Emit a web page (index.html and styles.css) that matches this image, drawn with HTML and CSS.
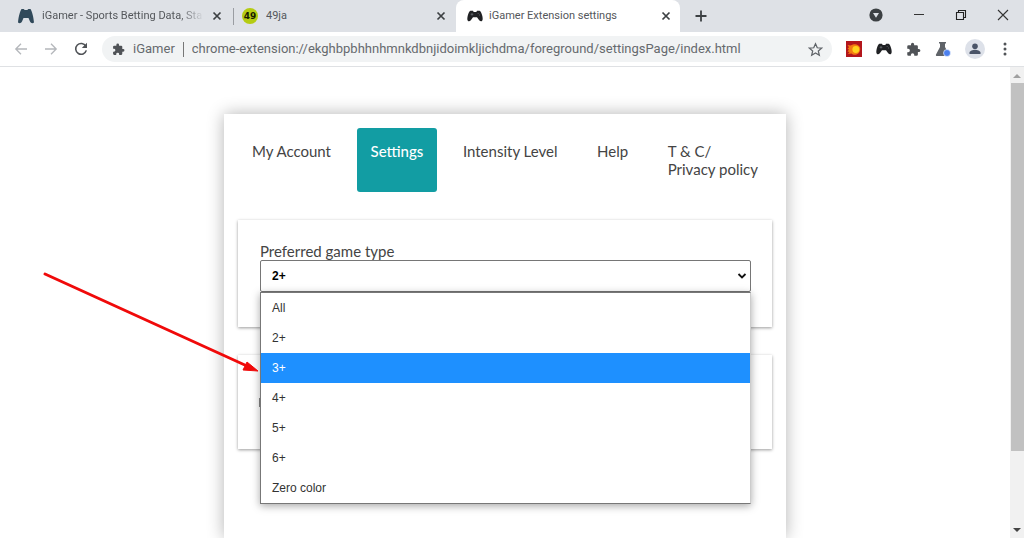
FILE: index.html
```html
<!DOCTYPE html>
<html lang="en">
<head>
<meta charset="utf-8">
<title>iGamer Extension settings</title>
<link rel="stylesheet" href="styles.css">
</head>
<body>
<svg class="defs" aria-hidden="true">
  <symbol id="pad" viewBox="0 0 24 18"><path d="M5 1h4l1 2h4l1-2h4c2 1 3 4 4 8 .6 3 1 6-.5 7.500-1.500 1-3 .4-4.500-1.500l-3-4H9l-3 4c-1.500 1.900-3 2.500-4.500 1.500C0 15 .4 12 1 9c1-4 2-7 4-8z"/><path d="M7.500 4.500v4M5.500 6.500h4M16 5.200h1.500M18 7.500h1.500" stroke="#70757a" stroke-width="1" fill="none"/></symbol>
  <symbol id="cross" viewBox="0 0 10 10"><path d="M1.500 1.500l7 7M8.500 1.500l-7 7" fill="none" stroke="currentColor" stroke-width="1.700"/></symbol>
  <symbol id="puzzle" viewBox="0 0 24 24"><path d="M20.500 11H19V7a2 2 0 0 0-2-2h-4V3.500a2.500 2.500 0 0 0-5 0V5H4a2 2 0 0 0-2 2v3.800h1.500a2.700 2.700 0 0 1 0 5.400H2V20a2 2 0 0 0 2 2h3.800v-1.500a2.700 2.700 0 0 1 5.400 0V22H17a2 2 0 0 0 2-2v-4h1.500a2.500 2.500 0 0 0 0-5z"/></symbol>
</svg>
<header class="browser">
  <div class="tabstrip">
    <div class="tab tab-first">
      <svg class="favicon favicon-tall" viewBox="0 0 16 16"><path d="M3.500 1h2.200l1 1h2.600l1-1h2.200C14 3 15.500 9 16 14.500c-1.500 1.200-3 .8-4-1L10.500 10h-5L4 13.500c-1 1.800-2.500 2.200-4 1C.5 9 2 3 3.500 1z"/></svg>
      <span class="tab-title fade">iGamer - Sports Betting Data, Sta</span>
      <button class="icon-btn" aria-label="Close tab"><svg class="x"><use href="#cross"/></svg></button>
    </div>
    <div class="tab tab-second">
      <span class="ball" aria-hidden="true">49</span>
      <span class="tab-title">49ja</span>
      <button class="icon-btn" aria-label="Close tab"><svg class="x"><use href="#cross"/></svg></button>
    </div>
    <div class="tab tab-active">
      <svg class="favicon"><use href="#pad"/></svg>
      <span class="tab-title">iGamer Extension settings</span>
      <button class="icon-btn" aria-label="Close tab"><svg class="x"><use href="#cross"/></svg></button>
    </div>
    <button class="icon-btn new-tab" aria-label="New tab"><svg viewBox="0 0 12 12" width="12" height="12"><path d="M6 .5v11M.5 6h11" stroke="#3c4043" stroke-width="1.800"/></svg></button>
    <div class="window-controls">
      <button class="icon-btn" aria-label="Search tabs"><svg viewBox="0 0 14 14" width="14" height="14"><circle cx="7" cy="7" r="6.600" fill="#3c4043"/><path d="M4 5h6L7 9.800z" fill="#dee1e6"/></svg></button>
      <button class="icon-btn" aria-label="Minimize"><svg viewBox="0 0 12 12" width="12" height="12"><path d="M1 5.500h10" stroke="#333"/></svg></button>
      <button class="icon-btn" aria-label="Restore"><svg viewBox="0 0 12 12" width="12" height="12"><path d="M1.500 3.500h7v7h-7zM3.500 3.500v-2h7v7h-2" fill="none" stroke="#222" stroke-width="1.100"/></svg></button>
      <button class="icon-btn" aria-label="Close"><svg viewBox="0 0 12 12" width="12" height="12"><path d="M1 1l10 10M11 1L1 11" stroke="#333" stroke-width="1.100"/></svg></button>
    </div>
  </div>
  <div class="toolbar">
    <div class="nav-buttons">
      <button class="icon-btn" aria-label="Back"><svg viewBox="0 0 14 14" width="14" height="14"><path d="M13 7H2M7 1.800L1.800 7 7 12.200" fill="none" stroke="#b4b7bb" stroke-width="1.300"/></svg></button>
      <button class="icon-btn" aria-label="Forward"><svg viewBox="0 0 14 14" width="14" height="14"><path d="M1 7h11M7 1.800L12.200 7 7 12.200" fill="none" stroke="#b4b7bb" stroke-width="1.300"/></svg></button>
      <button class="icon-btn" aria-label="Reload"><svg viewBox="0 0 14 14" width="14" height="14"><path d="M11.800 4.200A5.400 5.400 0 1 0 12.300 8.400" fill="none" stroke="#505357" stroke-width="1.600"/><path d="M13 .8v5.200H7.800z" fill="#505357"/></svg></button>
    </div>
    <div class="omnibox">
      <svg class="puzzle"><use href="#puzzle"/></svg>
      <span class="origin">iGamer</span>
      <input class="url" type="text" aria-label="Address" value="chrome-extension://ekghbpbhhnhmnkdbnjidoimkljichdma/foreground/settingsPage/index.html">
      <button class="icon-btn" aria-label="Bookmark"><svg viewBox="0 0 24 24" width="15" height="15"><path d="M12 2.800l2.800 6.400 7 .6-5.300 4.600 1.600 6.800-6.100-3.600-6.100 3.600 1.600-6.800-5.300-4.600 7-.6z" fill="none" stroke="#5f6368" stroke-width="2"/></svg></button>
    </div>
    <div class="extensions">
      <button class="icon-btn" aria-label="Fireball"><svg viewBox="0 0 16 16" width="16" height="16"><path fill="#b3161c" d="M0 0h16v16H0z"/><path d="M1.500 4l3 .6L7 3.500c3-1 6 .5 7 3 .8 3-.8 6-3.500 7-2 .7-4 0-5-1l-3.500.5 1.500-2-2-.5 1.500-2-1.500-.8 1.500-1.500z" fill="#f47a12"/><circle cx="9.800" cy="8.500" r="3.400" fill="#ffd21c"/></svg></button>
      <button class="icon-btn" aria-label="iGamer"><svg class="favicon"><use href="#pad"/></svg></button>
      <button class="icon-btn" aria-label="Extensions"><svg class="puzzle puzzle-large"><use href="#puzzle"/></svg></button>
      <button class="icon-btn" aria-label="Labs"><svg viewBox="0 0 16 16" width="16" height="16"><path d="M4 1h7v1.500h-1V6l4 7.500c.3 1-.2 1.500-1 1.500H2c-1 0-1.400-.7-1-1.500L5 6V2.500H4z" fill="#5f6368"/><circle cx="12" cy="12" r="3.500" fill="#4c80ee" stroke="#fff" stroke-width=".6"/></svg></button>
      <button class="icon-btn" aria-label="Profile"><svg viewBox="0 0 20 20" width="20" height="20"><circle cx="10" cy="10" r="10" fill="#dde1e9"/><circle cx="10" cy="7.200" r="2.800" fill="#4a5468"/><path d="M4.500 15v-1.300c0-2 3.500-3 5.500-3s5.500 1 5.500 3V15z" fill="#4a5468"/></svg></button>
      <button class="icon-btn more" aria-label="Menu"><svg viewBox="0 0 4 14" width="4" height="14" fill="#505357"><circle cx="2" cy="2" r="1.500"/><circle cx="2" cy="7" r="1.500"/><circle cx="2" cy="12" r="1.500"/></svg></button>
    </div>
  </div>
</header>
<div class="viewport">
  <main class="page">
    <div class="card">
      <nav class="menu">
        <a href="#account">My Account</a>
        <a href="#settings" class="current">Settings</a>
        <a href="#intensity">Intensity Level</a>
        <a href="#help">Help</a>
        <a href="#terms">T &amp; C/<br>Privacy policy</a>
      </nav>
      <section class="panel">
        <label for="game-type">Preferred game type</label>
        <div class="dropdown">
          <select id="game-type">
            <option>All</option>
            <option selected>2+</option>
            <option>3+</option>
            <option>4+</option>
            <option>5+</option>
            <option>6+</option>
            <option>Zero color</option>
          </select>
          <svg class="chevron" viewBox="0 0 10 8"><path d="M1.500 2L5 5.500 8.500 2" fill="none" stroke="#111" stroke-width="1.800"/></svg>
          <ul class="options" role="listbox" aria-label="Preferred game type">
            <li role="option">All</li>
            <li role="option">2+</li>
            <li role="option" class="hover" aria-selected="true">3+</li>
            <li role="option">4+</li>
            <li role="option">5+</li>
            <li role="option">6+</li>
            <li role="option">Zero color</li>
          </ul>
          <svg class="pointer" viewBox="0 0 220 104" aria-hidden="true"><path d="M5 4L207 96" stroke="#f00a0a" stroke-width="3" stroke-linecap="round"/><path d="M218 101l-15-1 4-8z" fill="#f00a0a" stroke="#f00a0a"/></svg>
        </div>
      </section>
      <section class="panel panel-short"><span class="field-edge"></span></section>
    </div>
  </main>
  <div class="scrollbar" aria-hidden="true">
    <svg viewBox="0 0 8 5" width="8" height="5"><path d="M0 5l4-4 4 4z" fill="#a0a0a0"/></svg>
    <div class="thumb"></div>
    <svg viewBox="0 0 8 5" width="8" height="5"><path d="M0 0l4 4 4-4z" fill="#444"/></svg>
  </div>
</div>
</body>
</html>
```
FILE: styles.css
```css
* { box-sizing: border-box; }
body {
  margin: 0;
  height: 100vh;
  display: flex;
  flex-direction: column;
  overflow: hidden;
  background: #fff;
  color: #444;
  font: 15px/18px Lato, sans-serif;
}
svg { display: block; flex: none; }
.defs { position: absolute; width: 0; height: 0; }
.icon-btn {
  display: flex;
  flex: none;
  padding: 0;
  border: 0;
  background: none;
  color: #3c4043;
}

.browser { font-family: Roboto, "Noto Sans", sans-serif; }
.tabstrip {
  display: flex;
  height: 32px;
  background: #dee1e6;
  font-size: 11px;
}
.tab {
  display: flex;
  align-items: center;
  gap: 8px;
  min-width: 0;
  color: #54575b;
}
.tab-first { flex: 0 1 233px; padding: 0 11px 0 18px; }
.tab-second { flex: 0 1 223px; padding: 0 10px 0 9px; background: linear-gradient(#9a9da2, #9a9da2) left 8px / 1px 17px no-repeat; }
.tab-active { flex: 0 1 224px; padding: 0 9px 0 11px; gap: 6px; background: #fff; border-radius: 8px 8px 0 0; }
.tab-title { flex: 1; min-width: 0; overflow: hidden; white-space: nowrap; }
.fade { mask-image: linear-gradient(90deg, #000 85%, transparent); }
.favicon { width: 16px; height: 14px; fill: #202124; }
.favicon-tall { height: 16px; fill: #30495a; }
.x { width: 10px; height: 10px; }
.ball {
  display: grid;
  place-items: center;
  width: 16px;
  height: 16px;
  border-radius: 50%;
  background: #b5cc12;
  color: #181c00;
  font: bold 9px/16px "DejaVu Sans", sans-serif;
}
.new-tab { align-items: center; margin-left: 15px; }
.window-controls {
  display: flex;
  align-items: center;
  gap: 30px;
  margin: 0 15px 2px auto;
}
.toolbar {
  display: flex;
  align-items: center;
  height: 35px;
  border-bottom: 1px solid #dfe1e4;
}
.nav-buttons { display: flex; gap: 16px; padding: 0 14px 0 14px; }
.omnibox {
  display: flex;
  flex: 1;
  align-items: center;
  min-width: 0;
  height: 26px;
  padding: 0 9px 0 10px;
  border-radius: 13px;
  background: #f1f3f4;
  color: #666a6e;
  font-size: 13px;
}
.puzzle { width: 13px; height: 13px; fill: #505357; }
.puzzle-large { width: 15px; height: 15px; }
.origin { margin: 0 8px 0 8px; }
.url {
  flex: 1;
  min-width: 0;
  height: 15px;
  padding: 0 0 0 8px;
  border: 0;
  border-left: 1px solid #777;
  background: none;
  color: inherit;
  font: inherit;
}
.extensions { display: flex; align-items: center; gap: 14px; padding: 0 17px 0 14px; }
.more { margin-left: 4px; }

.viewport { display: flex; flex: 1; min-height: 0; }
.page { flex: 1; min-width: 0; padding-top: 47px; overflow: hidden; }
.card {
  max-width: 562px;
  min-height: 100%;
  margin: 0 auto;
  padding: 14px;
  background: #fff;
  box-shadow: 0 0 16px rgba(0, 0, 0, .3);
}
.menu { display: flex; justify-content: space-between; }
.menu a {
  padding: 14px;
  border-radius: 3px;
  color: #444;
  text-decoration: none;
}
.menu .current { background: #129da3; color: #fff; font-weight: 500; }
.panel {
  margin-top: 28px;
  padding: 22px 21px 35px 22px;
  box-shadow: 0 1px 3px rgba(0, 0, 0, .4);
}
.panel label { display: block; }
.panel-short { min-height: 94px; padding-left: 21px; }
.field-edge { display: block; width: 2px; height: 9px; margin-top: 21px; background: #888; }
.dropdown { position: relative; font: 12px/30px "Liberation Sans", Arial, sans-serif; }
.dropdown select {
  display: block;
  width: 100%;
  height: 32px;
  padding: 0 11px;
  border: 1px solid #767676;
  border-radius: 2px;
  appearance: none;
  background: #fff;
  color: #000;
  font: bold 12px "Liberation Sans", Arial, sans-serif;
}
.chevron { position: absolute; right: 4px; top: 12px; width: 10px; height: 8px; }
.options {
  position: absolute;
  top: 100%;
  left: 0;
  right: 0;
  z-index: 2;
  margin: 0;
  padding: 0;
  border: 1px solid #777;
  border-right-color: #ccc;
  background: #fff;
  box-shadow: 0 2px 8px rgba(0, 0, 0, .35);
  color: #333;
  list-style: none;
}
.options li { padding: 0 11px; }
.options .hover { background: #1e90ff; color: #fff; }
.pointer { position: absolute; top: 10px; right: 100%; z-index: 3; width: 220px; height: 104px; }

.scrollbar {
  display: flex;
  flex: 0 0 14px;
  flex-direction: column;
  align-items: center;
  padding: 6px 0 5px;
  background: #f1f1f1;
}
.thumb { width: 13px; height: 80%; margin: 5px 0 auto 1px; background: #c1c1c1; }
```
